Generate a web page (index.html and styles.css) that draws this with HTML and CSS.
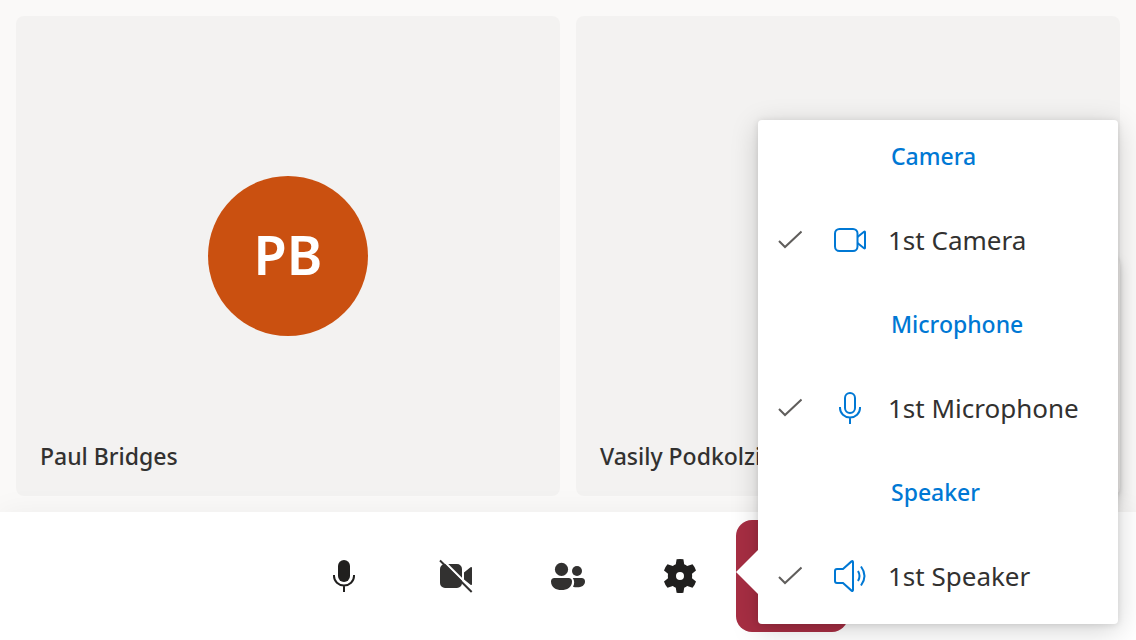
FILE: index.html
```html
<!DOCTYPE html>
<html lang="en">
<head>
<meta charset="utf-8">
<meta name="viewport" content="width=device-width, initial-scale=1">
<title>Call</title>
<link rel="stylesheet" href="styles.css">
</head>
<body>
<div class="call">
  <main class="stage">
    <section class="tile">
      <div class="avatar">PB</div>
      <p class="name">Paul Bridges</p>
    </section>
    <section class="tile">
      <p class="name">Vasily Podkolzin</p>
    </section>
    <div class="self-view"></div>
  </main>

  <footer class="controls">
    <button class="control" type="button" aria-label="Mute">
      <svg class="icon" viewBox="0 0 36 36"><rect x="12" y="2" width="12" height="22" rx="6" fill="#201f1e"/><path d="M8 17v1a10 9.500 0 0 0 20 0v-1M18 27.500V34" fill="none" stroke="#201f1e" stroke-width="2"/></svg>
    </button>
    <button class="control" type="button" aria-label="Turn camera on">
      <svg class="icon" viewBox="0 0 36 36"><path d="M7 6h12a5 5 0 0 1 5 5v14a5 5 0 0 1-5 5H7a5 5 0 0 1-5-5V11a5 5 0 0 1 5-5zM26 14.500L32.500 9.300Q34 8.500 34 10v16q0 1.500-1.500.700L26 21.500z" fill="#323130"/><path d="M3.500 .8L36 33.300" stroke="#fff" stroke-width="2.200"/><path d="M2 2.500L33.700 34" stroke="#323130" stroke-width="2"/></svg>
    </button>
    <button class="control" type="button" aria-label="People">
      <svg class="icon" viewBox="0 0 36 36"><g fill="#323130"><circle cx="11.500" cy="11.400" r="6.600"/><circle cx="27" cy="13" r="5"/><path d="M4.500 20h14a3.500 3.500 0 0 1 3.500 3.500C22 29.500 17 32 11.500 32S1 29.500 1 23.500A3.500 3.500 0 0 1 4.500 20zM22.800 20h8.700a3.500 3.500 0 0 1 3.500 3.500c0 4-3.500 5.800-8 5.800-1.500 0-2.900-.2-4-.6 1.700-2.600 1.500-6.200-.2-8.700z"/></g></svg>
    </button>
    <button class="control" type="button" aria-label="Settings" aria-haspopup="menu" aria-expanded="true">
      <svg class="icon" viewBox="0 0 36 36"><path fill="#201f1e" fill-rule="evenodd" d="M14.600 1.200Q18 .7 21.400 1.200L22.200 6.200Q23.700 6.800 25.200 7.900L30.500 6.200Q33 9 34 12.400L30 15.700Q30.300 18 30 20.300L34 23.600Q33 27 30.500 29.800L25.200 28.100Q23.700 29.200 22.200 29.800L21.400 34.800Q18 35.300 14.600 34.800L13.800 29.800Q12.300 29.200 10.800 28.100L5.500 29.800Q3 27 2 23.600L6 20.300Q5.700 18 6 15.700L2 12.400Q3 9 5.500 6.200L10.800 7.900Q12.300 6.800 13.800 6.200zM18 14a4 4 0 1 0 0 8 4 4 0 0 0 0-8z"/></svg>
    </button>
    <button class="control leave" type="button" aria-label="Leave"></button>
  </footer>

  <div class="menu" role="menu" aria-label="Devices">
    <h2 class="heading">Camera</h2>
    <button class="item" type="button" role="menuitemradio" aria-checked="true">
      <svg class="check" viewBox="0 0 24 24"><path d="M1 13l6 6L23.500 3.500"/></svg>
      <svg class="device" viewBox="0 0 36 36"><rect x="3" y="7" width="22.500" height="22" rx="4.500"/><path d="M25.500 15l6.500-5.200q1-.6 1 .5v15.400q0 1.100-1 .5L25.500 21"/></svg>
      <span>1st Camera</span>
    </button>
    <h2 class="heading">Microphone</h2>
    <button class="item" type="button" role="menuitemradio" aria-checked="true">
      <svg class="check" viewBox="0 0 24 24"><path d="M1 13l6 6L23.500 3.500"/></svg>
      <svg class="device" viewBox="0 0 36 36"><rect x="13" y="3" width="10" height="20" rx="5"/><path d="M8 17v1a10 9.500 0 0 0 20 0v-1M18 27.500V34"/></svg>
      <span>1st Microphone</span>
    </button>
    <h2 class="heading">Speaker</h2>
    <button class="item" type="button" role="menuitemradio" aria-checked="true">
      <svg class="check" viewBox="0 0 24 24"><path d="M1 13l6 6L23.500 3.500"/></svg>
      <svg class="device" viewBox="0 0 36 36"><path d="M5 11h6l8.500-7.600q1.500-1 1.500.8v27.600q0 1.800-1.500.8L11 25H5q-2 0-2-2V13q0-2 2-2zM26 13q3 5 0 10M29 8.500q7 9.500 0 19"/></svg>
      <span>1st Speaker</span>
    </button>
  </div>
</div>
</body>
</html>
```
FILE: styles.css
```css
* { box-sizing: border-box; }

body {
  margin: 0;
  font-family: "Segoe UI", "Noto Sans", sans-serif;
  color: #323130;
  background: #faf9f8;
}

.call {
  position: relative;
  display: flex;
  flex-direction: column;
  min-height: 100vh;
  overflow: hidden;
}

.stage {
  position: relative;
  flex: 1;
  display: grid;
  grid-template-columns: 1fr 1fr;
  gap: 16px;
  padding: 16px;
}

.tile {
  display: grid;
  grid-template-rows: 1fr auto 1fr;
  background: #f3f2f1;
  border-radius: 8px;
}

.avatar {
  grid-row: 2;
  justify-self: center;
  display: grid;
  place-items: center;
  width: 160px;
  height: 160px;
  padding-bottom: 4px;
  border-radius: 50%;
  background: #ca5010;
  color: #fff;
  font-size: 54px;
  font-weight: 600;
  line-height: 1;
}

.name {
  grid-row: 3;
  align-self: end;
  margin: 0;
  padding: 24px;
  font-size: 23px;
  font-weight: 500;
  line-height: 32px;
}

.self-view {
  position: absolute;
  right: 16px;
  bottom: 16px;
  width: 180px;
  height: 240px;
  border-radius: 8px;
  background: #edebe9;
  box-shadow: 0 6px 14px rgba(0, 0, 0, .13), 0 1px 4px rgba(0, 0, 0, .11);
}

.controls {
  position: relative;
  display: flex;
  justify-content: center;
  padding: 8px;
  background: #fff;
  box-shadow: 0 0 28px rgba(0, 0, 0, .05);
}

.control {
  display: grid;
  place-items: center;
  width: 112px;
  height: 112px;
  padding: 0;
  border: 0;
  border-radius: 16px;
  background: transparent;
}

.icon {
  width: 36px;
  height: 36px;
}

.leave { background: #a72e43; }

.menu {
  position: absolute;
  right: 18px;
  bottom: 16px;
  width: 360px;
  border-radius: 4px;
  background: #fff;
  box-shadow: 0 6px 28px rgba(0, 0, 0, .18), 0 1px 7px rgba(0, 0, 0, .11);
}

.menu::before {
  content: "";
  position: absolute;
  left: -22px;
  bottom: 30px;
  width: 22px;
  height: 44px;
  background: #fff;
  clip-path: polygon(0 50%, 100% 0, 100% 100%);
}

.heading {
  margin: 0;
  padding-left: 133px;
  color: #0078d4;
  font-size: 23px;
  font-weight: 500;
  line-height: 72px;
}

.item {
  display: flex;
  align-items: center;
  width: 100%;
  height: 96px;
  padding: 0 20px;
  border: 0;
  background: transparent;
  color: inherit;
  font: inherit;
  font-size: 26px;
  text-align: left;
  white-space: nowrap;
}

.check {
  width: 24px;
  height: 24px;
  margin-right: 30px;
  fill: none;
  stroke: #605e5c;
  stroke-width: 2;
}

.device {
  width: 36px;
  height: 36px;
  margin-right: 20px;
  fill: none;
  stroke: #0078d4;
  stroke-width: 2;
}
```
